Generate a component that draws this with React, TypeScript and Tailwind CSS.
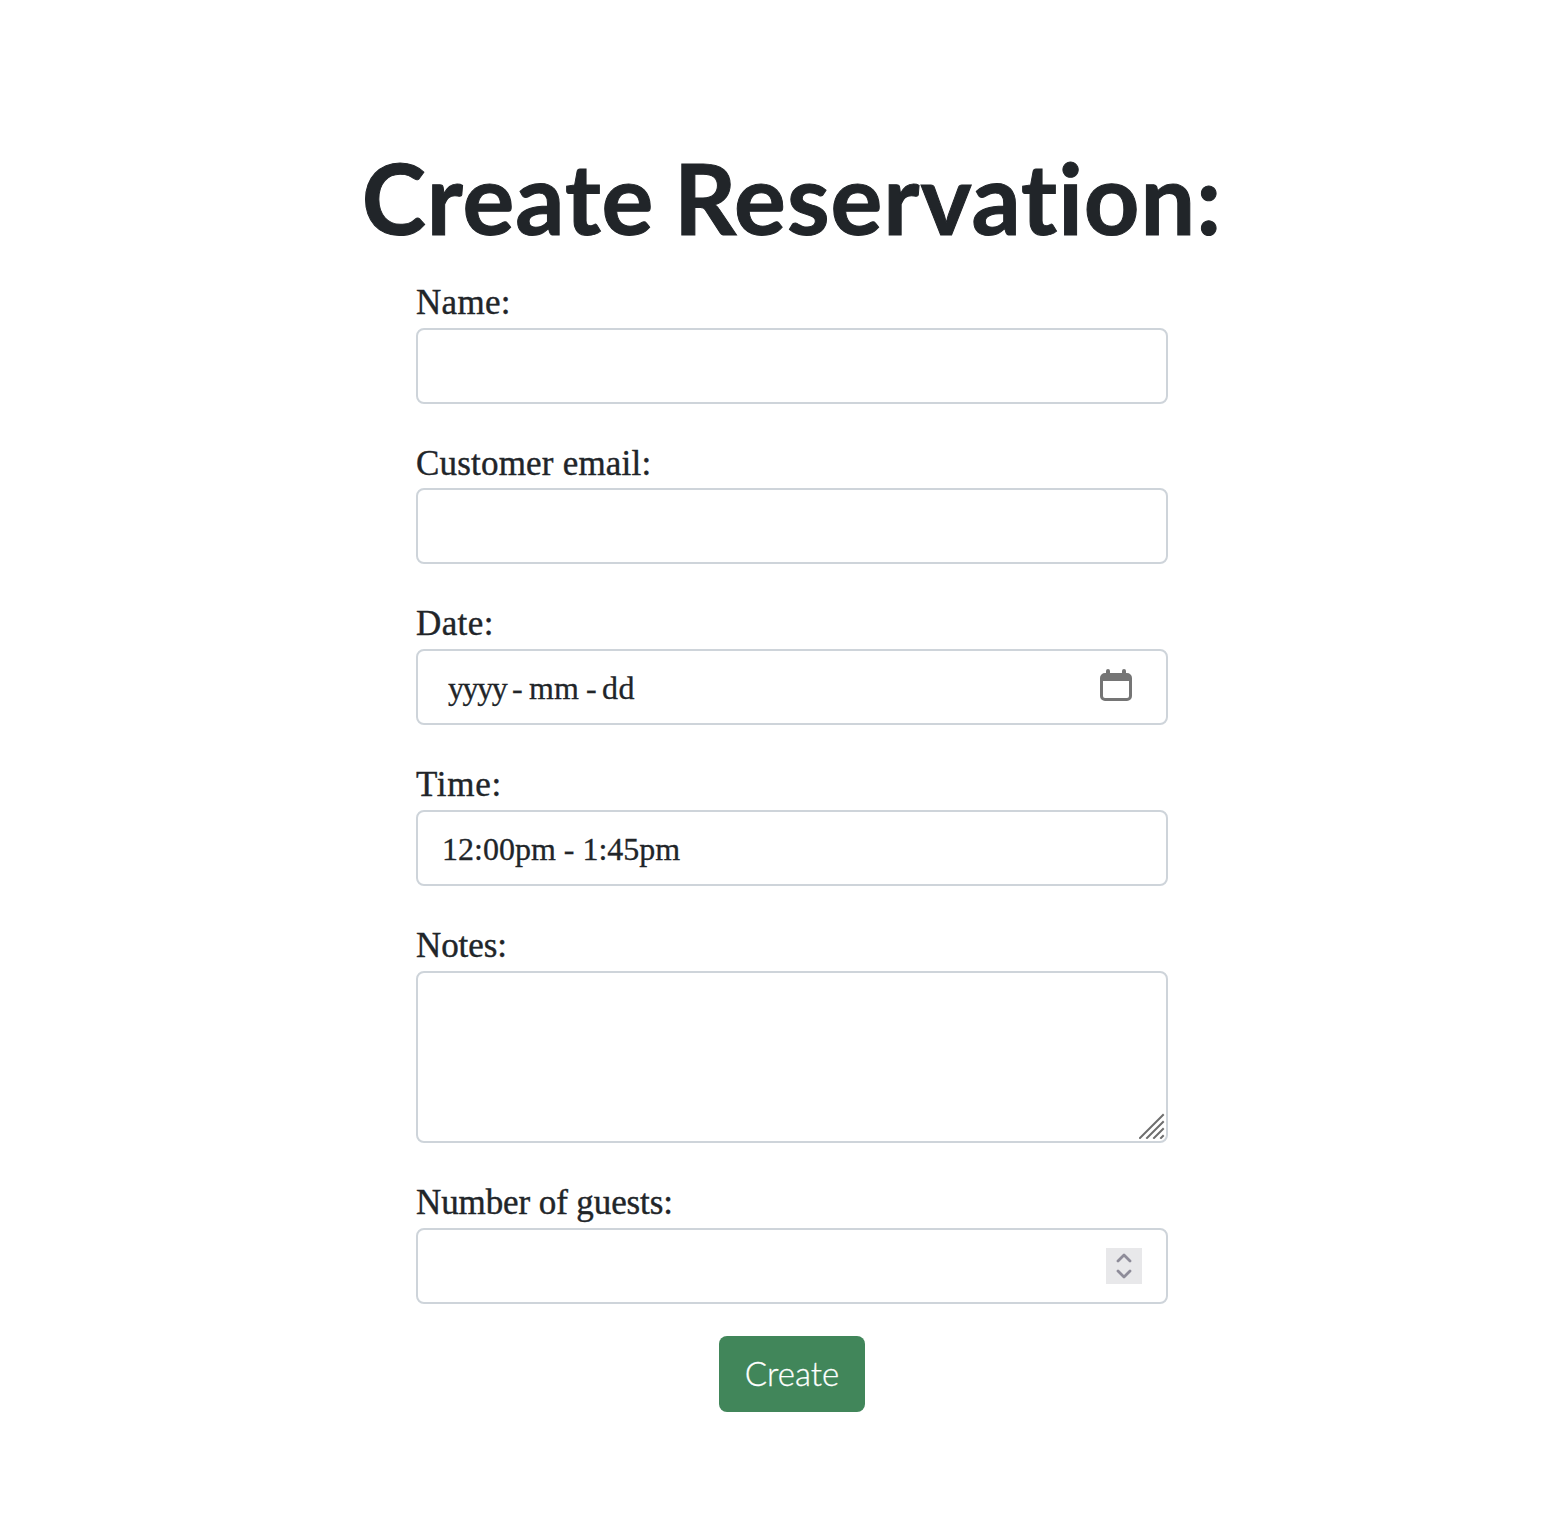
import type { ReactNode } from "react";

const control =
  "block w-full rounded-[8px] border-2 border-[#ced4da] bg-white outline-none focus:border-[#86b7fe]";

type FieldProps = { label: string; labelClass: string; className?: string; children: ReactNode };

function Field({ label, labelClass, className = "mt-[37px]", children }: FieldProps) {
  return (
    <label className={"block " + className}>
      <span
        className={
          "block whitespace-nowrap pt-[2px] text-[35px] leading-[42px] [-webkit-text-stroke:0.4px_#212529] " + labelClass
        }
      >
        {label}
      </span>
      {children}
    </label>
  );
}

function CalendarIcon() {
  return (
    <svg width="32" height="32" viewBox="0 0 32 32" fill="none" aria-hidden="true">
      <path fill="#757575" d="M6 4V2a2 2 0 0 1 4 0v2h12V2a2 2 0 0 1 4 0v2h1a5 5 0 0 1 5 5v18a5 5 0 0 1-5 5H5a5 5 0 0 1-5-5V9a5 5 0 0 1 5-5Z" />
      <path fill="#fff" d="M3 12h26v15a2 2 0 0 1-2 2H5a2 2 0 0 1-2-2Z" />
    </svg>
  );
}

export default function App() {
  return (
    <main className="min-h-[1532px] overflow-hidden bg-white pl-[36px] font-['Liberation_Serif',serif] text-[#212529]">
      <h1 className="mt-[138px] whitespace-nowrap text-center font-['Lato',sans-serif] text-[97px] font-bold leading-[120px] tracking-[1px] [font-variant-ligatures:none] [word-spacing:-5px] [-webkit-text-stroke:1px_#212529]">
        Create Reservation:
      </h1>

      <form className="mx-auto mt-[22px] w-[752px]" onSubmit={(e) => e.preventDefault()}>
        <Field label="Name:" labelClass="h-[48px] tracking-[0.3px]" className="">
          <input className={control + " h-[76px] px-[24px] text-[32px]"} />
        </Field>

        <Field label="Customer email:" labelClass="h-[47px] tracking-[0.2px]">
          <input className={control + " h-[76px] px-[24px] text-[32px]"} />
        </Field>

        <Field label="Date:" labelClass="h-[48px] tracking-[0.4px]">
          <div className={control + " flex h-[76px] items-center justify-between pl-[30px] pr-[34px] text-[32px] leading-[48px]"}>
            <div className="flex whitespace-nowrap pt-[2px] [-webkit-text-stroke:0.3px_#212529]">
              <span className="w-[64px] tracking-[-1.4px]">yyyy</span>
              <span className="w-[17px]">-</span>
              <span className="w-[57px]">mm</span>
              <span className="w-[16px]">-</span>
              <span className="tracking-[0.5px]">dd</span>
            </div>
            <span className="pb-[4px]">
              <CalendarIcon />
            </span>
          </div>
        </Field>

        <Field label="Time:" labelClass="h-[48px] tracking-[0.7px]">
          <div className={control + " flex h-[76px] items-center px-[24px] pt-[2px] text-[32px] leading-[48px] [-webkit-text-stroke:0.3px_#212529]"}>
            12:00pm - 1:45pm
          </div>
        </Field>

        <Field label="Notes:" labelClass="h-[48px] tracking-[-0.1px]">
          <div className="relative">
            <textarea className={control + " h-[172px] resize-none px-[24px] py-[12px] text-[32px]"} />
            <svg
              className="pointer-events-none absolute bottom-[4px] right-[3px]"
              width="26"
              height="26"
              viewBox="0 0 26 26"
              fill="none"
              stroke="#6e6e6e"
              strokeWidth="2"
              strokeLinecap="square"
              aria-hidden="true"
            >
              <path d="M1 25 24 2M8 25 24 9M15 25l9-9M22 25l2-2" />
            </svg>
          </div>
        </Field>

        <Field label="Number of guests:" labelClass="h-[48px] tracking-[-0.1px]">
          <div className={control + " flex h-[76px] items-center justify-end pr-[24px]"}>
            <span className="flex h-[36px] w-[36px] items-center justify-center bg-[#e8e8ea]">
              <svg
                width="36"
                height="36"
                viewBox="0 0 36 36"
                fill="none"
                stroke="#8e8c99"
                strokeWidth="2.8"
                strokeLinecap="round"
                strokeLinejoin="round"
                aria-hidden="true"
              >
                <path d="m12 13 6-6 6 6M12 23l6 6 6-6" />
              </svg>
            </span>
          </div>
        </Field>

        <button className="mx-auto mt-[32px] flex h-[76px] w-[146px] items-center justify-center rounded-[8px] bg-[#41865a] pb-px font-['Lato',sans-serif] text-[33px] font-light text-white [-webkit-text-stroke:0.3px_#fff]">
          Create
        </button>
      </form>
    </main>
  );
}
